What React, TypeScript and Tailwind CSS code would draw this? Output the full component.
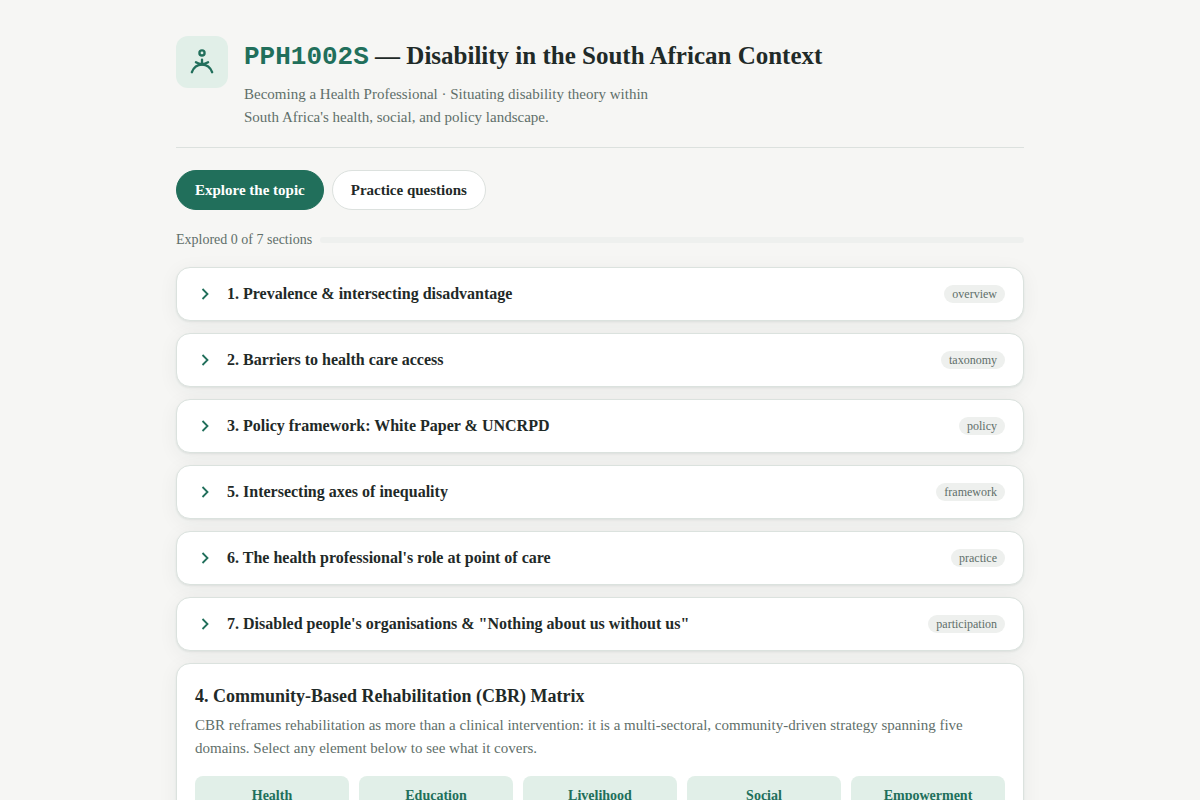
import { useState } from "react";

const sections = [
  { title: "1. Prevalence & intersecting disadvantage", tag: "overview" },
  { title: "2. Barriers to health care access", tag: "taxonomy" },
  { title: "3. Policy framework: White Paper & UNCRPD", tag: "policy" },
  { title: "5. Intersecting axes of inequality", tag: "framework" },
  { title: "6. The health professional's role at point of care", tag: "practice" },
  { title: "7. Disabled people's organisations & \"Nothing about us without us\"", tag: "participation" },
];

const domains = ["Health", "Education", "Livelihood", "Social", "Empowerment"];

const cardClass =
  "rounded-[14px] border border-[#dbe2de] bg-white shadow-[0_1px_2px_rgba(31,58,50,0.08),0_4px_20px_rgba(31,58,50,0.06)]";

function Logo() {
  return (
    <div className="flex size-13 shrink-0 items-center justify-center rounded-xl bg-[#e1efe8] text-[#216f5b]">
      <svg
        className="size-7"
        viewBox="0 0 24 24"
        fill="none"
        stroke="currentColor"
        strokeWidth="2"
        strokeLinecap="round"
        strokeLinejoin="round"
        aria-hidden="true"
      >
        <circle cx="12" cy="4.2" r="2.2" />
        <path d="M12 10v4" />
        <path d="M6.8 12.2c1.600.9 3.400 1.500 5.200 1.700 1.800-.2 3.600-.8 5.200-1.700" />
        <path d="M3.3 20.8c1.500-4 4.700-6.500 8.700-6.500s7.200 2.500 8.700 6.500" />
      </svg>
    </div>
  );
}

function Chevron() {
  return (
    <svg
      className="size-5 shrink-0 text-[#216f5b]"
      viewBox="0 0 24 24"
      fill="none"
      stroke="currentColor"
      strokeWidth="2.2"
      aria-hidden="true"
    >
      <path d="M9 6l6 6-6 6" />
    </svg>
  );
}

export default function App() {
  const [tab, setTab] = useState("explore");
  const tabClass = (active: boolean) =>
    "cursor-pointer rounded-full border px-[18px] py-2 text-[15px] leading-[22px] font-bold " +
    (active
      ? "border-[#216f5b] bg-[#216f5b] text-white"
      : "border-[#dce1de] bg-white text-[#1f2a28]");

  return (
    <div className="min-h-screen bg-[#f6f6f4] font-['Liberation_Serif',serif] text-[#1f2a28]">
      <main className="mx-auto max-w-[888px] px-5 pt-9 pb-16">
        <header className="flex items-start gap-4 border-b border-[#dce1de] pb-[18px]">
          <Logo />
          <div>
            <h1 className="text-[25px] leading-10 font-bold">
              <span className="font-['Liberation_Mono',monospace] text-[26px] text-[#216f5b]">PPH1002S</span> —
              Disability in the South African Context
            </h1>
            <p className="mt-[6px] max-w-[430px] text-[15px] leading-[23px] text-[#5f6f6a]">
              Becoming a Health Professional · Situating disability theory within South Africa's health, social, and
              policy landscape.
            </p>
          </div>
        </header>

        <nav className="mt-[22px] flex gap-2">
          <button type="button" className={tabClass(tab === "explore")} onClick={() => setTab("explore")}>
            Explore the topic
          </button>
          <button type="button" className={tabClass(tab === "practice")} onClick={() => setTab("practice")}>
            Practice questions
          </button>
        </nav>

        <div className="mt-5 flex items-center gap-2 text-sm text-[#5f6f6a]">
          <span id="progress-label">Explored 0 of 7 sections</span>
          <div
            role="progressbar"
            aria-labelledby="progress-label"
            aria-valuemin={0}
            aria-valuemax={7}
            aria-valuenow={0}
            className="h-1.5 flex-1 rounded-full bg-[#eef0ee]"
          />
        </div>

        <div className="mt-[17px] flex flex-col gap-3">
          {sections.map((s) => (
            <section key={s.title} className={cardClass}>
              <button
                type="button"
                aria-expanded="false"
                className="flex w-full cursor-pointer items-center gap-3 px-[18px] py-[14px] text-left"
              >
                <Chevron />
                <span className="flex-1 text-base leading-6 font-bold">{s.title}</span>
                <span className="rounded-full bg-[#eef0ee] px-2 text-xs leading-[18px] text-[#5f6f6a]">
                  {s.tag}
                </span>
              </button>
            </section>
          ))}

          <section className={cardClass + " px-[18px] py-5"}>
            <h2 className="text-lg leading-6 font-bold">4. Community-Based Rehabilitation (CBR) Matrix</h2>
            <p className="mt-[6px] text-[15px] leading-[23px] text-[#5f6f6a]">
              CBR reframes rehabilitation as more than a clinical intervention: it is a multi-sectoral, community-driven
              strategy spanning five domains. Select any element below to see what it covers.
            </p>
            <div className="mt-4 grid grid-cols-5 gap-[10px]">
              {domains.map((d) => (
                <h3
                  key={d}
                  className="rounded-lg bg-[#e1efe8] px-2 py-2 text-center text-sm leading-6 font-bold text-[#216f5b]"
                >
                  {d}
                </h3>
              ))}
            </div>
          </section>
        </div>
      </main>
    </div>
  );
}
